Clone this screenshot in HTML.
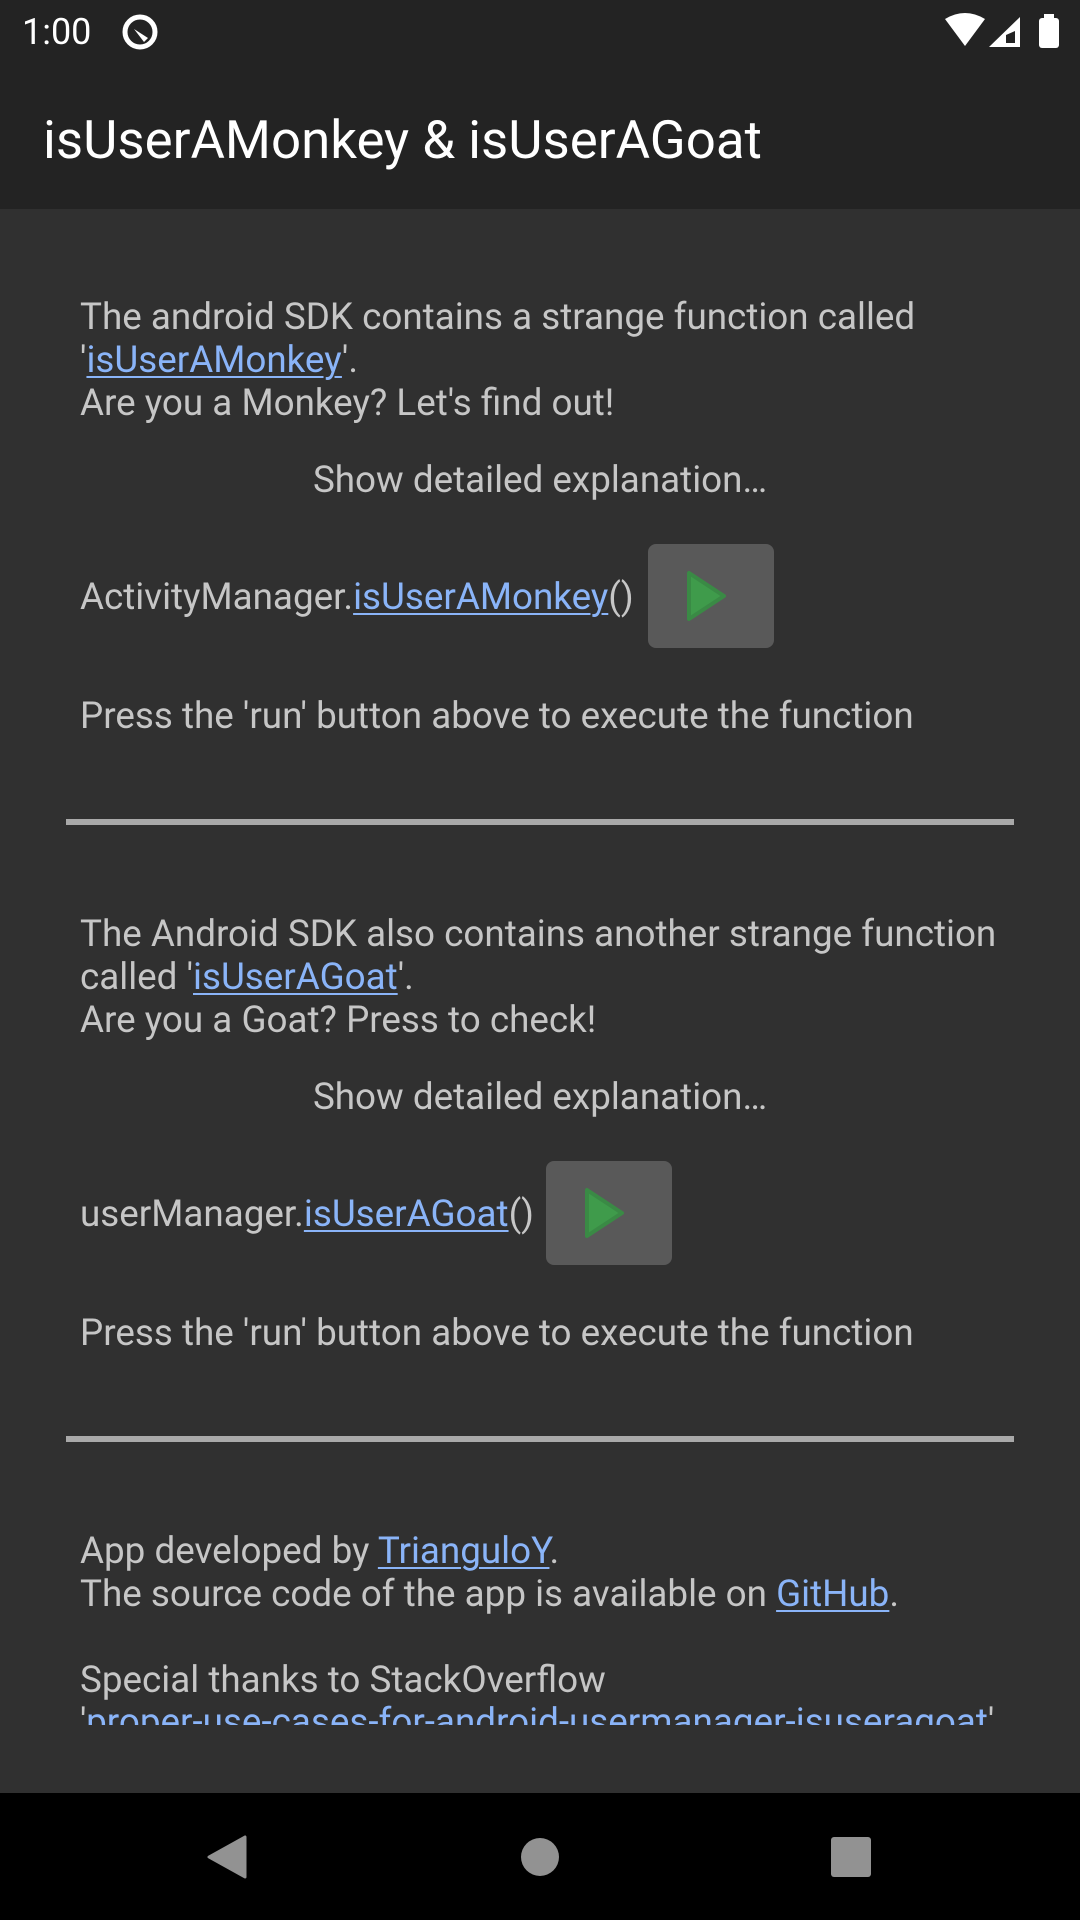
<!DOCTYPE html>
<html><head><meta charset="utf-8"><style>
*{margin:0;padding:0;box-sizing:border-box}
body{width:1080px;height:1920px;background:#303030;position:relative;overflow:hidden;font-family:"Roboto","Liberation Sans",sans-serif;color:#c6c6c6}
.bar{position:absolute;left:0;top:0;width:1080px;height:209px;background:#232323}
.t{position:absolute;left:80px;font-size:36.8px;line-height:43px;white-space:nowrap}
a{color:#8ab4f8;text-decoration:underline;text-decoration-thickness:2px;text-underline-offset:4px}
.c{left:0;width:1080px;text-align:center}
.btn{position:absolute;width:126px;height:104px;background:#595959;border-radius:8px}
.div{position:absolute;left:66px;width:948px;height:6px;background:#a9a9a9}
</style></head><body>
<div class="bar"></div>
<div style="position:absolute;left:22px;top:11px;font-size:36px;color:#fff">1:00</div>
<svg style="position:absolute;left:120px;top:12px" width="40" height="40" viewBox="0 0 40 40"><circle cx="20" cy="20" r="15" fill="none" stroke="#fff" stroke-width="5"/><path d="M14 17 L24 30 L28 26 Z" fill="#fff"/></svg>
<svg style="position:absolute;left:940px;top:10px" width="125" height="42" viewBox="0 0 125 42"><path d="M5 9 Q25 -3 45 9 L25 36 Z" fill="#fff"/><path d="M80 7 L80 37 L49 37 Z" fill="#fff"/><path d="M75 21 L75 33 L66 33 L66 25 Z" fill="#232323"/><rect x="99" y="8" width="20" height="30" rx="3" fill="#fff"/><rect x="104" y="4" width="10" height="5" fill="#fff"/></svg>
<div style="position:absolute;left:43px;top:110px;font-size:52.8px;line-height:60px;color:#fff;white-space:nowrap">isUserAMonkey &amp; isUserAGoat</div>

<div class="t" style="top:295px">The android SDK contains a strange function called</div>
<div class="t" style="top:338px">'<a>isUserAMonkey</a>'.</div>
<div class="t" style="top:381px">Are you a Monkey? Let's find out!</div>
<div class="t c" style="top:458px">Show detailed explanation…</div>
<div class="t" style="top:575px">ActivityManager.<a>isUserAMonkey</a>()</div>
<div class="btn" style="left:648px;top:544px"></div>
<svg style="position:absolute;left:648px;top:544px" width="126" height="104"><path d="M41 29 L41 75 L76 52 Z" fill="#3f9b4b" stroke="#3a8a45" stroke-width="4" stroke-linejoin="round"/></svg>
<div class="t" style="top:694px">Press the 'run' button above to execute the function</div>
<div class="div" style="top:819px"></div>

<div class="t" style="top:912px">The Android SDK also contains another strange function</div>
<div class="t" style="top:955px">called '<a>isUserAGoat</a>'.</div>
<div class="t" style="top:998px">Are you a Goat? Press to check!</div>
<div class="t c" style="top:1075px">Show detailed explanation…</div>
<div class="t" style="top:1192px">userManager.<a>isUserAGoat</a>()</div>
<div class="btn" style="left:546px;top:1161px"></div>
<svg style="position:absolute;left:546px;top:1161px" width="126" height="104"><path d="M41 29 L41 75 L76 52 Z" fill="#3f9b4b" stroke="#3a8a45" stroke-width="4" stroke-linejoin="round"/></svg>
<div class="t" style="top:1311px">Press the 'run' button above to execute the function</div>
<div class="div" style="top:1436px"></div>

<div class="t" style="top:1529px">App developed by <a>TrianguloY</a>.</div>
<div class="t" style="top:1572px">The source code of the app is available on <a>GitHub</a>.</div>
<div class="t" style="top:1658px">Special thanks to StackOverflow</div>
<div style="position:absolute;left:0;top:1700px;width:1080px;height:25px;overflow:hidden">
<div class="t" style="top:0">'<a>proper-use-cases-for-android-usermanager-isuseragoat</a>'</div></div>

<div style="position:absolute;left:0;top:1793px;width:1080px;height:127px;background:#000"></div>
<svg style="position:absolute;left:0;top:1793px" width="1080" height="127"><path d="M245 44 L245 84 L209 64 Z" fill="#929292" stroke="#929292" stroke-width="3" stroke-linejoin="round"/><circle cx="540" cy="64" r="19" fill="#929292"/><rect x="831" y="44" width="40" height="40" rx="3" fill="#929292"/></svg>
</body></html>
